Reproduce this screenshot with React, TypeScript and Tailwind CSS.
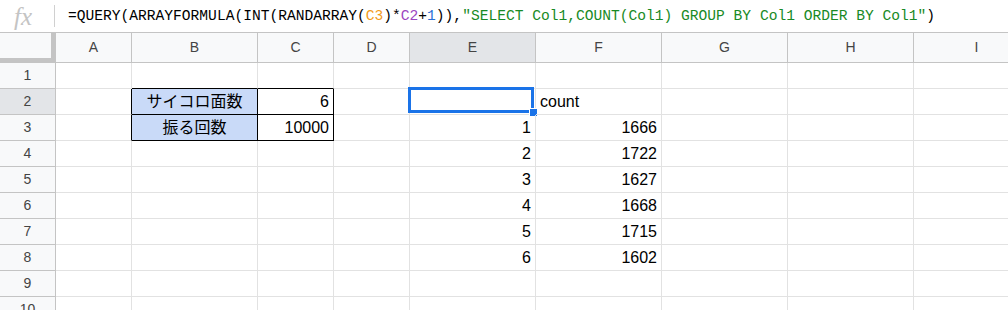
const COLS = [
  { name: 'A', w: 'w-[76px]' },
  { name: 'B', w: 'w-[126px]' },
  { name: 'C', w: 'w-[76px]' },
  { name: 'D', w: 'w-[76px]' },
  { name: 'E', w: 'w-[126px]' },
  { name: 'F', w: 'w-[126px]' },
  { name: 'G', w: 'w-[126px]' },
  { name: 'H', w: 'w-[126px]' },
  { name: 'I', w: 'w-[126px]' },
]

type CellData = {
  text?: string
  align?: 'left' | 'right' | 'center'
  fill?: boolean
  rb?: boolean // black right border
  bb?: boolean // black bottom border
}

const CELLS: Record<string, CellData> = {
  B1: { bb: true },
  C1: { bb: true },
  A2: { rb: true },
  A3: { rb: true },
  B2: { text: 'サイコロ面数', align: 'center', fill: true, rb: true, bb: true },
  C2: { text: '6', align: 'right', rb: true, bb: true },
  B3: { text: '振る回数', align: 'center', fill: true, rb: true, bb: true },
  C3: { text: '10000', align: 'right', rb: true, bb: true },
  F2: { text: 'count', align: 'left' },
  E3: { text: '1', align: 'right' },
  F3: { text: '1666', align: 'right' },
  E4: { text: '2', align: 'right' },
  F4: { text: '1722', align: 'right' },
  E5: { text: '3', align: 'right' },
  F5: { text: '1627', align: 'right' },
  E6: { text: '4', align: 'right' },
  F6: { text: '1668', align: 'right' },
  E7: { text: '5', align: 'right' },
  F7: { text: '1715', align: 'right' },
  E8: { text: '6', align: 'right' },
  F8: { text: '1602', align: 'right' },
}

const ROWS = [1, 2, 3, 4, 5, 6, 7, 8, 9, 10]

function FormulaBar() {
  return (
    <div className="flex h-[33px] items-center border-b border-[#c4c4c4] bg-white">
      <div className="w-[54px] pl-[14px] font-['Liberation_Serif',serif] text-[25px] italic leading-none text-[#c4c4c4]">
        fx
      </div>
      <div className="h-[22px] w-px bg-[#d0d0d0]" />
      <div className="pl-[13px] pt-[1px] whitespace-pre font-['Liberation_Mono',monospace] text-[14.6px] text-black">
        =QUERY(ARRAYFORMULA(INT(RANDARRAY(<span className="text-[#f29b1c]">C3</span>)*
        <span className="text-[#9c45bf]">C2</span>+<span className="text-[#2a6fd6]">1</span>)),
        <span className="text-[#188a25]">"SELECT Col1,COUNT(Col1) GROUP BY Col1 ORDER BY Col1"</span>)
      </div>
    </div>
  )
}

function HeaderRow() {
  return (
    <div className="flex h-[30px]">
      <div className="h-full w-[56px] shrink-0 border-r-[5px] border-b-[5px] border-[#c4c4c4] bg-[#f8f9fa]" />
      {COLS.map((c) => (
        <div
          key={c.name}
          className={`${c.w} flex h-full shrink-0 items-center justify-center border-r border-b border-[#c4c4c4] text-[14px] text-[#444] ${
            c.name === 'E' ? 'bg-[#e3e5e8]' : 'bg-[#f8f9fa]'
          }`}
        >
          {c.name}
        </div>
      ))}
    </div>
  )
}

function Row({ r }: { r: number }) {
  return (
    <div className="flex h-[26px]">
      <div
        className={`flex h-full w-[56px] shrink-0 items-center justify-center border-r border-b border-[#c4c4c4] text-[14px] text-[#444] ${
          r === 2 ? 'bg-[#e3e5e8]' : 'bg-[#f8f9fa]'
        }`}
      >
        {r}
      </div>
      {COLS.map((c) => {
        const id = `${c.name}${r}`
        const d = CELLS[id] || {}
        const selected = id === 'E2'
        return (
          <div
            key={id}
            className={`${c.w} relative flex h-full shrink-0 items-end border-r border-b border-[#e2e2e2] px-[4px] pb-[3px] text-[16px] leading-[18px] text-black ${
              d.rb ? 'border-r-black' : ''
            } ${d.bb ? 'border-b-black' : ''} ${d.fill ? 'bg-[#c9daf8]' : ''} ${
              d.align === 'right' ? 'justify-end' : d.align === 'center' ? 'justify-center' : 'justify-start'
            }`}
          >
            {d.text && <span className="whitespace-nowrap">{d.text}</span>}
            {selected && (
              <>
                <div className="absolute -top-[2px] -left-[2px] right-[1px] bottom-[1px] border-[3px] border-[#1a73e8]" />
                <div className="absolute left-[119px] top-[19px] h-[9px] w-[9px] border border-white bg-[#1a73e8]" />
              </>
            )}
          </div>
        )
      })}
    </div>
  )
}

export default function App() {
  return (
    <div className="h-[310px] w-[1008px] overflow-hidden bg-white font-['Liberation_Sans','Noto_Sans_CJK_JP',sans-serif]">
      <FormulaBar />
      <HeaderRow />
      {ROWS.map((r) => (
        <Row key={r} r={r} />
      ))}
    </div>
  )
}
